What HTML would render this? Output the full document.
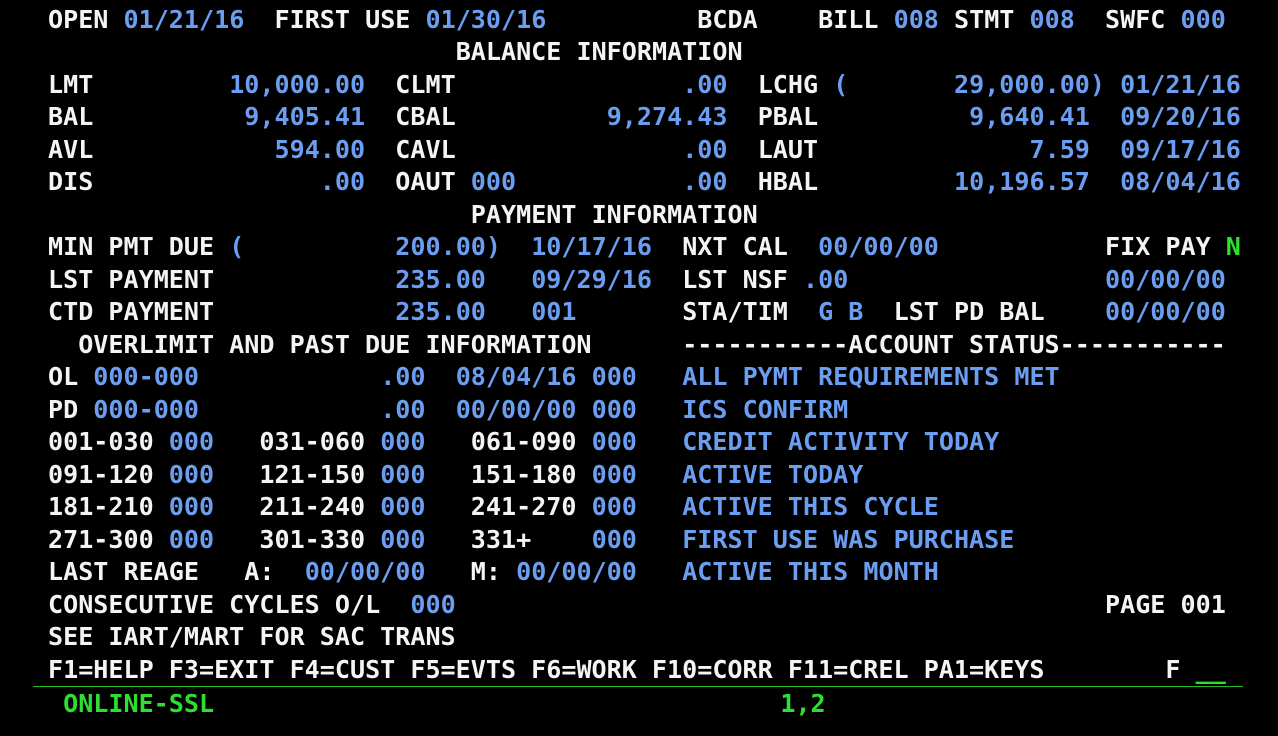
<!DOCTYPE html>
<html><head><meta charset="utf-8"><style>
html,body{margin:0;padding:0;background:#000;}
body{width:1278px;height:736px;position:relative;overflow:hidden;font-family:"DejaVu Sans Mono","Liberation Mono",monospace;font-size:25.08px;font-weight:bold;color:#f4f4f4;}
s{text-decoration:none;position:absolute;white-space:pre;line-height:32.5px;left:calc(48px + var(--c)*15.1px);top:calc(3.75px + var(--r)*32.5px);}
.b{color:#6b9df0}.g{color:#2ee02e}
.line{position:absolute;left:33px;top:686px;width:1210px;height:1px;background:#1fbf1f;}
</style></head><body>
<s style="--r:0;--c:0">OPEN</s><s class="b" style="--r:0;--c:5">01/21/16</s><s style="--r:0;--c:15">FIRST USE</s><s class="b" style="--r:0;--c:25">01/30/16</s><s style="--r:0;--c:43">BCDA</s><s style="--r:0;--c:51">BILL</s><s class="b" style="--r:0;--c:56">008</s><s style="--r:0;--c:60">STMT</s><s class="b" style="--r:0;--c:65">008</s><s style="--r:0;--c:70">SWFC</s><s class="b" style="--r:0;--c:75">000</s>
<s style="--r:1;--c:27">BALANCE INFORMATION</s>
<s style="--r:2;--c:0">LMT</s><s class="b" style="--r:2;--c:12">10,000.00</s><s style="--r:2;--c:23">CLMT</s><s class="b" style="--r:2;--c:42">.00</s><s style="--r:2;--c:47">LCHG</s><s class="b" style="--r:2;--c:52">(</s><s class="b" style="--r:2;--c:60">29,000.00)</s><s class="b" style="--r:2;--c:71">01/21/16</s>
<s style="--r:3;--c:0">BAL</s><s class="b" style="--r:3;--c:13">9,405.41</s><s style="--r:3;--c:23">CBAL</s><s class="b" style="--r:3;--c:37">9,274.43</s><s style="--r:3;--c:47">PBAL</s><s class="b" style="--r:3;--c:61">9,640.41</s><s class="b" style="--r:3;--c:71">09/20/16</s>
<s style="--r:4;--c:0">AVL</s><s class="b" style="--r:4;--c:15">594.00</s><s style="--r:4;--c:23">CAVL</s><s class="b" style="--r:4;--c:42">.00</s><s style="--r:4;--c:47">LAUT</s><s class="b" style="--r:4;--c:65">7.59</s><s class="b" style="--r:4;--c:71">09/17/16</s>
<s style="--r:5;--c:0">DIS</s><s class="b" style="--r:5;--c:18">.00</s><s style="--r:5;--c:23">OAUT</s><s class="b" style="--r:5;--c:28">000</s><s class="b" style="--r:5;--c:42">.00</s><s style="--r:5;--c:47">HBAL</s><s class="b" style="--r:5;--c:60">10,196.57</s><s class="b" style="--r:5;--c:71">08/04/16</s>
<s style="--r:6;--c:28">PAYMENT INFORMATION</s>
<s style="--r:7;--c:0">MIN PMT DUE</s><s class="b" style="--r:7;--c:12">(</s><s class="b" style="--r:7;--c:23">200.00)</s><s class="b" style="--r:7;--c:32">10/17/16</s><s style="--r:7;--c:42">NXT CAL</s><s class="b" style="--r:7;--c:51">00/00/00</s><s style="--r:7;--c:70">FIX PAY</s><s class="g" style="--r:7;--c:78">N</s>
<s style="--r:8;--c:0">LST PAYMENT</s><s class="b" style="--r:8;--c:23">235.00</s><s class="b" style="--r:8;--c:32">09/29/16</s><s style="--r:8;--c:42">LST NSF</s><s class="b" style="--r:8;--c:50">.00</s><s class="b" style="--r:8;--c:70">00/00/00</s>
<s style="--r:9;--c:0">CTD PAYMENT</s><s class="b" style="--r:9;--c:23">235.00</s><s class="b" style="--r:9;--c:32">001</s><s style="--r:9;--c:42">STA/TIM</s><s class="b" style="--r:9;--c:51">G B</s><s style="--r:9;--c:56">LST PD BAL</s><s class="b" style="--r:9;--c:70">00/00/00</s>
<s style="--r:10;--c:2">OVERLIMIT AND PAST DUE INFORMATION</s><s style="--r:10;--c:42">-----------ACCOUNT STATUS-----------</s>
<s style="--r:11;--c:0">OL</s><s class="b" style="--r:11;--c:3">000-000</s><s class="b" style="--r:11;--c:22">.00</s><s class="b" style="--r:11;--c:27">08/04/16</s><s class="b" style="--r:11;--c:36">000</s><s class="b" style="--r:11;--c:42">ALL PYMT REQUIREMENTS MET</s>
<s style="--r:12;--c:0">PD</s><s class="b" style="--r:12;--c:3">000-000</s><s class="b" style="--r:12;--c:22">.00</s><s class="b" style="--r:12;--c:27">00/00/00</s><s class="b" style="--r:12;--c:36">000</s><s class="b" style="--r:12;--c:42">ICS CONFIRM</s>
<s style="--r:13;--c:0">001-030</s><s class="b" style="--r:13;--c:8">000</s><s style="--r:13;--c:14">031-060</s><s class="b" style="--r:13;--c:22">000</s><s style="--r:13;--c:28">061-090</s><s class="b" style="--r:13;--c:36">000</s><s class="b" style="--r:13;--c:42">CREDIT ACTIVITY TODAY</s>
<s style="--r:14;--c:0">091-120</s><s class="b" style="--r:14;--c:8">000</s><s style="--r:14;--c:14">121-150</s><s class="b" style="--r:14;--c:22">000</s><s style="--r:14;--c:28">151-180</s><s class="b" style="--r:14;--c:36">000</s><s class="b" style="--r:14;--c:42">ACTIVE TODAY</s>
<s style="--r:15;--c:0">181-210</s><s class="b" style="--r:15;--c:8">000</s><s style="--r:15;--c:14">211-240</s><s class="b" style="--r:15;--c:22">000</s><s style="--r:15;--c:28">241-270</s><s class="b" style="--r:15;--c:36">000</s><s class="b" style="--r:15;--c:42">ACTIVE THIS CYCLE</s>
<s style="--r:16;--c:0">271-300</s><s class="b" style="--r:16;--c:8">000</s><s style="--r:16;--c:14">301-330</s><s class="b" style="--r:16;--c:22">000</s><s style="--r:16;--c:28">331+</s><s class="b" style="--r:16;--c:36">000</s><s class="b" style="--r:16;--c:42">FIRST USE WAS PURCHASE</s>
<s style="--r:17;--c:0">LAST REAGE</s><s style="--r:17;--c:13">A:</s><s class="b" style="--r:17;--c:17">00/00/00</s><s style="--r:17;--c:28">M:</s><s class="b" style="--r:17;--c:31">00/00/00</s><s class="b" style="--r:17;--c:42">ACTIVE THIS MONTH</s>
<s style="--r:18;--c:0">CONSECUTIVE CYCLES O/L</s><s class="b" style="--r:18;--c:24">000</s><s style="--r:18;--c:70">PAGE 001</s>
<s style="--r:19;--c:0">SEE IART/MART FOR SAC TRANS</s>
<s style="--r:20;--c:0">F1=HELP F3=EXIT F4=CUST F5=EVTS F6=WORK F10=CORR F11=CREL PA1=KEYS</s><s style="--r:20;--c:74">F</s><s class="g" style="--r:20;--c:76">__</s>
<div class="line"></div>
<s class="g" style="--r:21;--c:1;top:688px">ONLINE-SSL</s><s class="g" style="--r:21;--c:48.5;top:688px">1,2</s>
</body></html>
